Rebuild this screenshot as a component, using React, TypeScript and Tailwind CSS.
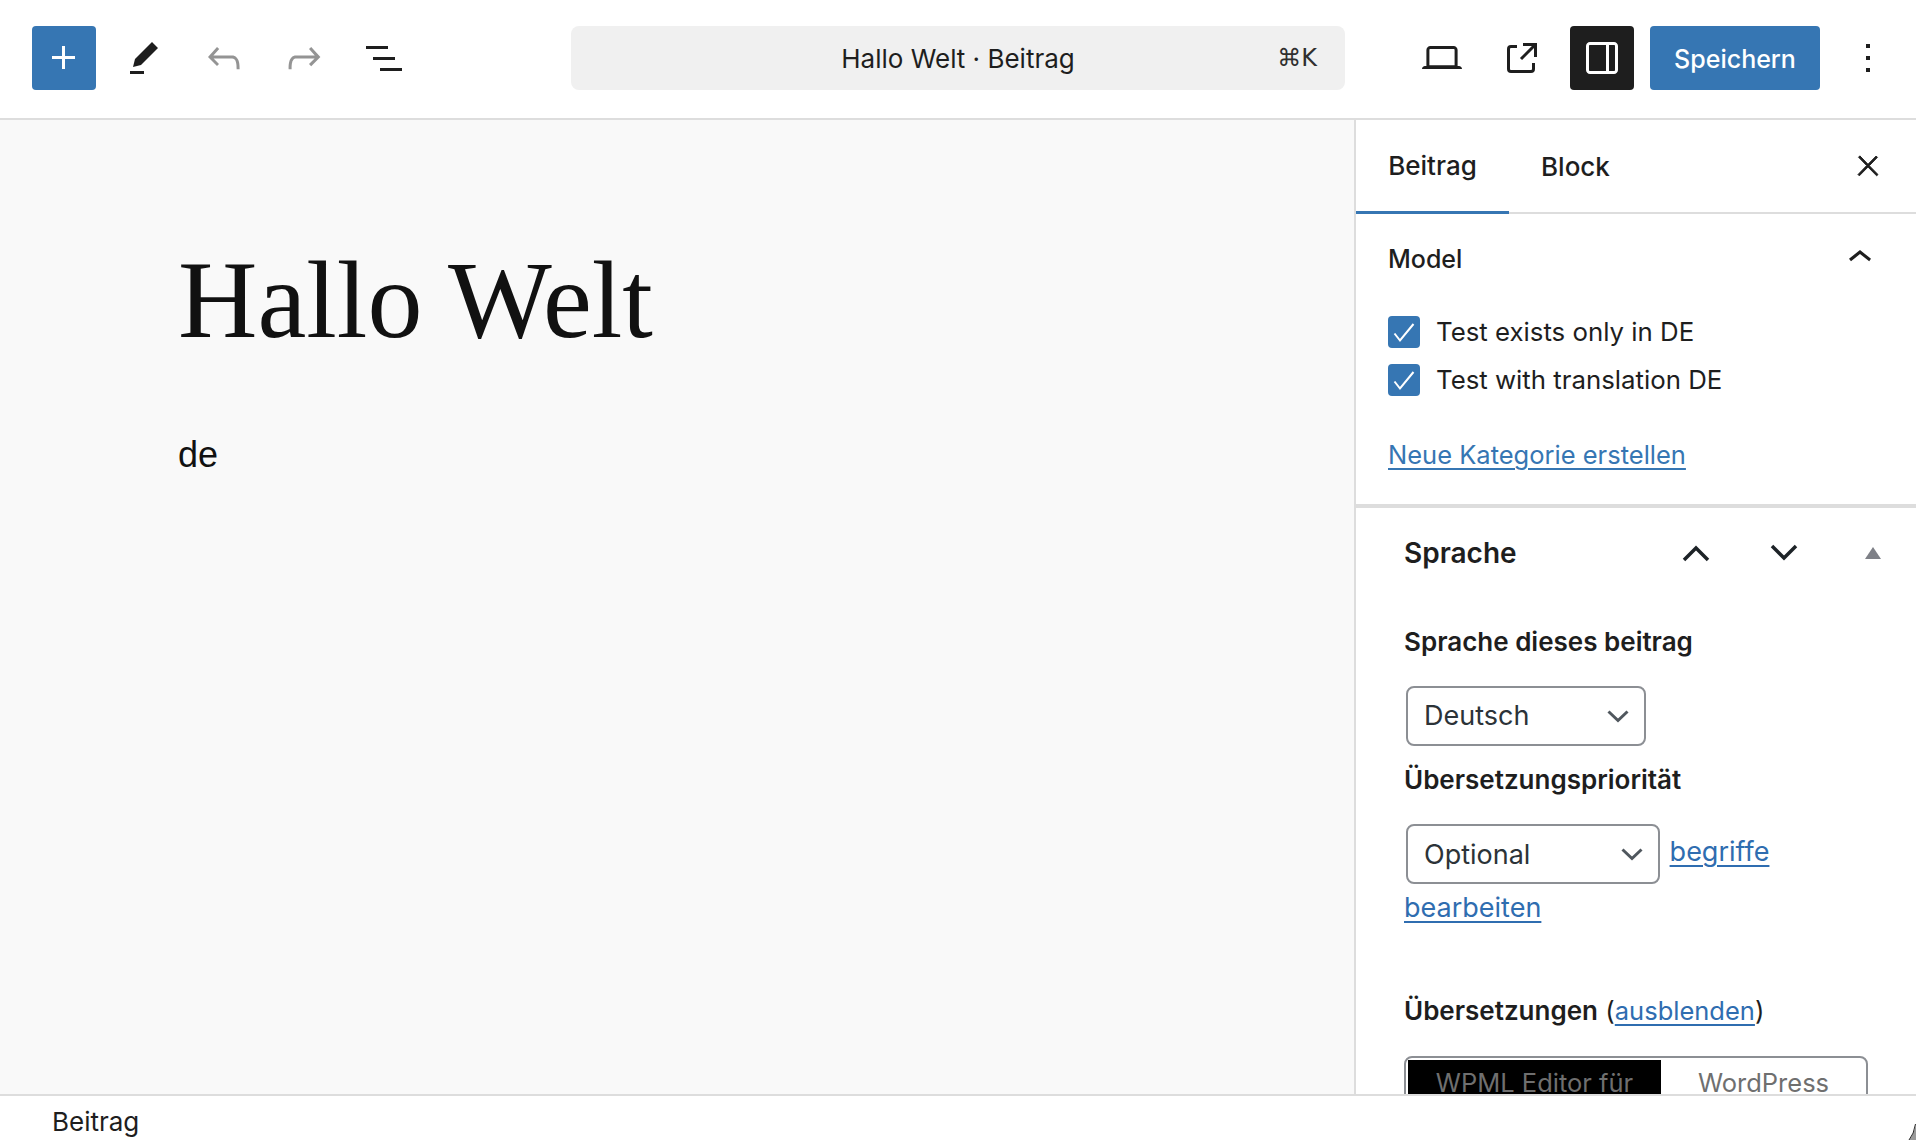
import type { ReactNode } from "react";

const ICONS = {
  plus: "M11 12.5V17.5H12.5V12.5H17.5V11H12.5V6H11V11H6V12.5H11Z",
  tool: "M19 7L16 4L7.5 12.5L6.5 16.5L10.5 15.5L19 7ZM12 18.5H5V20H12V18.5Z",
  undo: "M18.3 11.7c-.6-.6-1.4-.9-2.3-.9H6.7l2.9-3.3-1.1-1-4.5 5L8.5 16l1-1-2.7-2.7H16c.5 0 .9.2 1.3.5 1 1 1 3.4 1 4.5v.3h1.5v-.2c0-1.5 0-4.3-1.5-5.7z",
  redo: "M15.6 6.5l-1.1 1 2.9 3.3H8c-.9 0-1.7.3-2.3.9-1.4 1.5-1.4 4.2-1.4 5.7v.2h1.5v-.3c0-1.5 0-3.5 1-4.5.3-.3.7-.5 1.3-.5h9.2L14.5 15l1.1 1.1 4.6-4.6-4.6-5z",
  list: "M3 6h11v1.5H3V6Zm3.5 5.5h11V13h-11v-1.5ZM21 17H10v1.5h11V17Z",
  desktop:
    "M20.5 16h-.7V8c0-1.1-.9-2-2-2H6.2c-1.1 0-2 .9-2 2v8h-.7c-.8 0-1.5.7-1.5 1.5h20c0-.8-.7-1.5-1.5-1.5zM5.7 8c0-.3.2-.5.5-.5h11.6c.3 0 .5.2.5.5v7.6H5.7V8z",
  external:
    "M19.5 4.5h-7V6h4.44l-5.97 5.97 1.06 1.06L18 7.06v4.44h1.5v-7Zm-13 1a2 2 0 0 0-2 2v10a2 2 0 0 0 2 2h10a2 2 0 0 0 2-2v-3H17v3a.5.5 0 0 1-.5.5h-10a.5.5 0 0 1-.5-.5v-10a.5.5 0 0 1 .5-.5h3V5.5h-3Z",
  drawer:
    "M18 4H6c-1.1 0-2 .9-2 2v12c0 1.1.9 2 2 2h12c1.1 0 2-.9 2-2V6c0-1.1-.9-2-2-2zm-4 14.5H6c-.3 0-.5-.2-.5-.5V6c0-.3.2-.5.5-.5h8v13zm4.5-.5c0 .3-.2.5-.5.5h-2.5v-13H18c.3 0 .5.2.5.5v12z",
  more: "M13 19h-2v-2h2v2zm0-6h-2v-2h2v2zm0-6h-2V5h2v2z",
  close:
    "M13 11.8l6.1-6.3-1-1-6.1 6.2-6.1-6.3-1 1 6.1 6.3-6.5 6.7 1 1 6.5-6.6 6.5 6.6 1-1z",
  chevronUp: "M6.5 12.4L12 8l5.5 4.4-.9 1.2L12 10l-4.5 3.6-1-1.2z",
};

function Icon({ name, className }: { name: keyof typeof ICONS; className?: string }) {
  return (
    <svg viewBox="0 0 24 24" className={className ?? "h-12 w-12"} fill="currentColor">
      <path d={ICONS[name]} />
    </svg>
  );
}

function ToolButton({ name, muted }: { name: keyof typeof ICONS; muted?: boolean }) {
  return (
    <button
      type="button"
      className={`flex h-16 w-16 items-center justify-center ${muted ? "text-[#949494]" : "text-[#1e1e1e]"}`}
    >
      <Icon name={name} />
    </button>
  );
}

function Chevron() {
  return (
    <svg viewBox="0 0 22 14" className="h-[14px] w-[22px]" fill="none" stroke="#50575e" strokeWidth="3">
      <path d="M1.5 2.5 11 11.5l9.5-9" />
    </svg>
  );
}

function FakeSelect({ value, width }: { value: string; width: string }) {
  return (
    <span
      className={`ml-[2px] inline-flex h-[60px] items-center justify-between rounded-lg border-2 border-[#8c8f94] bg-white pl-4 pr-[15px] align-middle text-[27px] text-[#2c3338] ${width}`}
    >
      <span className="pt-px">{value}</span>
      <Chevron />
    </span>
  );
}

function CheckRow({ children }: { children: ReactNode }) {
  return (
    <label className="flex h-8 items-center gap-4">
      <span className="flex h-8 w-8 items-center justify-center rounded bg-[#3676b3]">
        <svg viewBox="0 0 24 24" className="h-6 w-6" fill="none" stroke="white" strokeWidth="2">
          <path d="M2.5 13.5 8 20.5 21.5 4" />
        </svg>
      </span>
      <span className="text-[25.8px] text-[#1e1e1e]">{children}</span>
    </label>
  );
}

export default function App() {
  return (
    <div className="relative flex h-[1140px] flex-col overflow-hidden bg-white font-['Inter',sans-serif] text-[#1e1e1e]">
      <header className="flex h-[120px] shrink-0 items-center border-b-2 border-[#dddddd] pb-0.5 pl-8 pr-4">
        <button type="button" className="flex h-16 w-16 items-center justify-center rounded bg-[#3676b3] text-white">
          <Icon name="plus" />
        </button>
        <div className="ml-4 flex gap-4">
          <ToolButton name="tool" />
          <ToolButton name="undo" muted />
          <ToolButton name="redo" muted />
          <ToolButton name="list" />
        </div>
        <div className="relative ml-[155px] flex h-16 w-[774px] items-center justify-center rounded-lg bg-[#f0f0f0] text-[26px]">
          Hallo Welt · Beitrag
          <span className="absolute right-7 font-['DejaVu_Sans','Inter',sans-serif] text-[24px] text-[#2f2f2f]">⌘K</span>
        </div>
        <div className="ml-auto flex items-center gap-4">
          <ToolButton name="desktop" />
          <ToolButton name="external" />
          <button type="button" className="flex h-16 w-16 items-center justify-center rounded bg-[#1e1e1e] text-white">
            <Icon name="drawer" />
          </button>
          <button type="button" className="h-16 w-[170px] rounded bg-[#3676b3] pt-1 text-[25px] font-medium text-white">
            Speichern
          </button>
          <ToolButton name="more" />
        </div>
      </header>

      <div className="flex min-h-0 flex-1">
        <main className="min-w-0 flex-1 bg-[#f9f9f9] pl-[178px] pt-[120px]">
          <h1 className="font-['Liberation_Serif',serif] text-[110px] leading-[1.1] text-[#111111]">Hallo Welt</h1>
          <p className="mt-[67px] font-['Liberation_Sans',sans-serif] text-[36px] leading-[54px] text-[#111111]">de</p>
        </main>

        <aside className="w-[562px] shrink-0 overflow-hidden border-l-2 border-[#dddddd] bg-white">
          <div className="flex h-[94px] items-center border-b-2 border-[#dddddd] pr-4 text-[26px] font-medium">
            <span className="-mb-0.5 flex h-[94px] w-[153px] items-center justify-center border-b-[3px] border-[#3676b3]">
              Beitrag
            </span>
            <span className="ml-8">Block</span>
            <span className="ml-auto flex h-16 w-16 items-center justify-center">
              <Icon name="close" className="h-8 w-8 stroke-current stroke-[0.7]" />
            </span>
          </div>

          <section className="border-b-4 border-[#dddddd] px-8 pb-[31px]">
            <div className="flex h-[88px] items-center justify-between text-[25px] font-medium">
              <span className="pt-[3px]">Model</span>
              <Icon name="chevronUp" className="h-12 w-12" />
            </div>
            <div className="mt-[14px] flex flex-col gap-4">
              <CheckRow>Test exists only in DE</CheckRow>
              <CheckRow>Test with translation DE</CheckRow>
            </div>
            <a href="#" className="mt-[41px] block text-[25.5px] leading-9 text-[#3676b3] underline underline-offset-4">
              Neue Kategorie erstellen
            </a>
          </section>

          <section className="px-12">
            <div className="flex h-[90px] items-center text-[28px] font-semibold">
              Sprache
              <span className="-mr-[13px] ml-auto flex items-center gap-[60px]">
                <svg viewBox="0 0 28 18" className="h-[18px] w-7" fill="none" stroke="#1d2327" strokeWidth="3.5">
                  <path d="M2 16 14 4l12 12" />
                </svg>
                <svg viewBox="0 0 28 18" className="h-[18px] w-7" fill="none" stroke="#1d2327" strokeWidth="3.5">
                  <path d="M2 2l12 12L26 2" />
                </svg>
                <span className="ml-[7px] h-0 w-0 border-x-8 border-b-[12px] border-x-transparent border-b-[#7e8087]" />
              </span>
            </div>
            <div className="mt-[26px] text-[26px] font-semibold leading-9">Sprache dieses beitrag</div>
            <div className="mt-[26px]">
              <FakeSelect value="Deutsch" width="w-[240px]" />
            </div>
            <div className="mt-[16px] text-[26px] font-semibold leading-9">Übersetzungspriorität</div>
            <div className="mt-[26px] w-[464px] text-[27px] leading-[47px]">
              <FakeSelect value="Optional" width="w-[254px]" />{" "}
              <a href="#" className="ml-[2px] text-[#2f6db0] underline underline-offset-4">
                begriffe bearbeiten
              </a>
            </div>
            <div className="mt-[62px] text-[26px] leading-9">
              <span className="font-semibold">Übersetzungen</span> (
              <a href="#" className="text-[25.5px] text-[#2f6db0] underline underline-offset-4">
                ausblenden
              </a>
              )
            </div>
            <div className="mt-[27px] flex h-[60px] w-[464px] rounded-t-lg border-2 border-[#8c8f94] pl-[2px] pt-[2px] text-center text-[25.5px] text-[#6f6f6f]">
              <span className="w-[253px] bg-black pt-1">WPML Editor für</span>
              <span className="flex-1 pt-1">WordPress</span>
            </div>
          </section>
        </aside>
      </div>

      <footer className="relative flex h-[46px] shrink-0 items-center border-t-2 border-[#dddddd] bg-white pl-[52px] pt-[6px] text-[26px]">
        Beitrag
        <svg viewBox="0 0 8 16" className="absolute bottom-0 right-0 h-4 w-2">
          <path d="M8 0Q6 10 1 16L8 16Z" fill="#9a9a9a" />
          <path d="M7.5 0Q6 10 1 16" fill="none" stroke="#2a2a2a" strokeWidth="1" />
        </svg>
      </footer>
    </div>
  );
}
